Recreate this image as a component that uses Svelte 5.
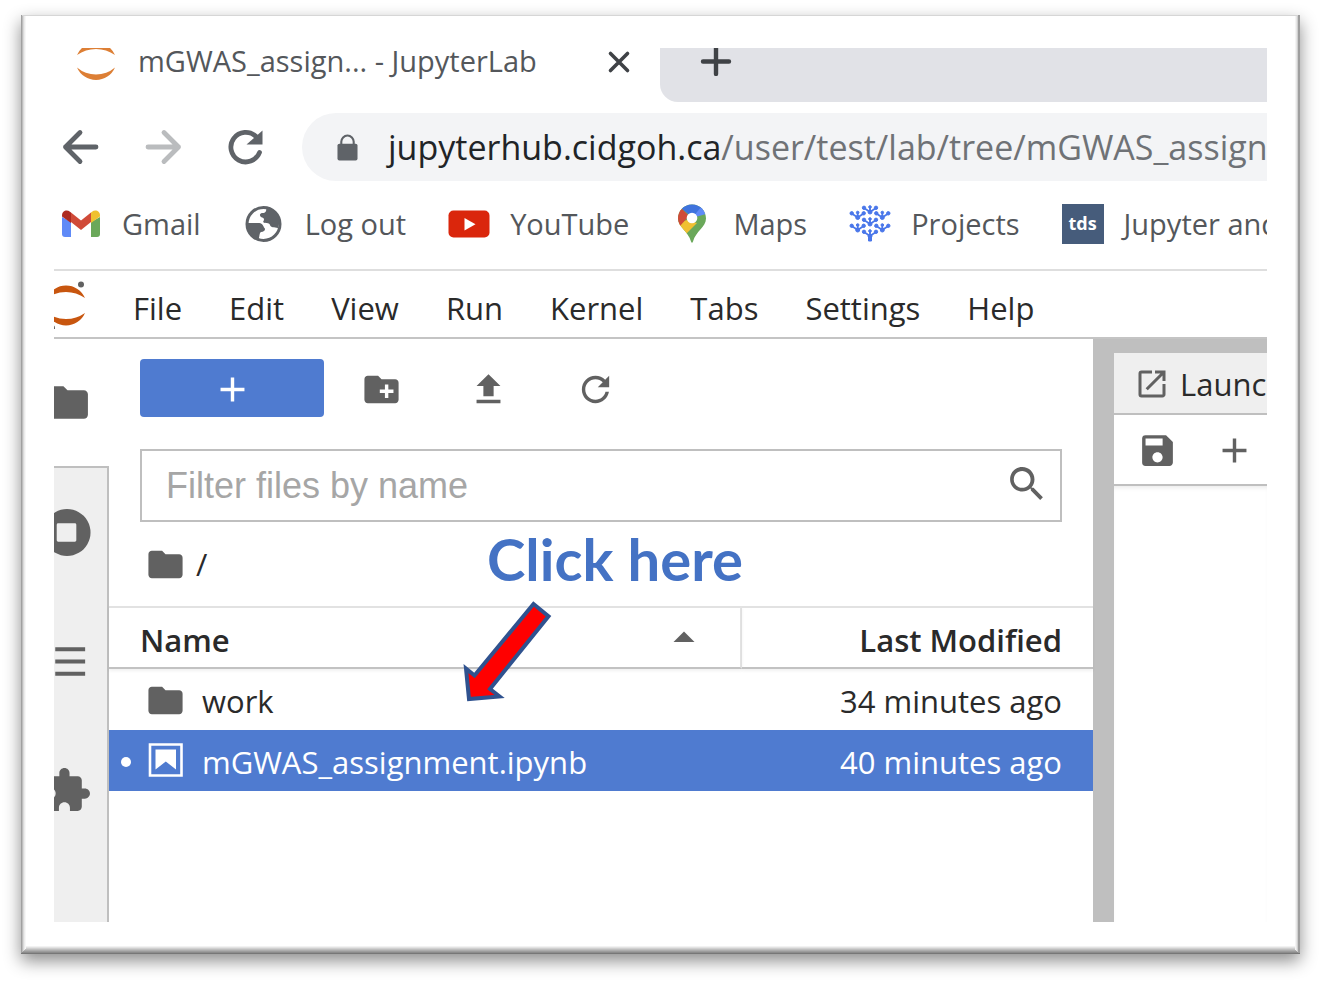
<script>
  const menus = ['File', 'Edit', 'View', 'Run', 'Kernel', 'Tabs', 'Settings', 'Help'];
  const bookmarks = [
    { id: 'gmail', label: 'Gmail' },
    { id: 'globe', label: 'Log out' },
    { id: 'youtube', label: 'YouTube' },
    { id: 'maps', label: 'Maps' },
    { id: 'projects', label: 'Projects' },
    { id: 'tds', label: 'Jupyter and' }
  ];
  const files = [
    { name: 'work', modified: '34 minutes ago', kind: 'folder', selected: false },
    { name: 'mGWAS_assignment.ipynb', modified: '40 minutes ago', kind: 'notebook', selected: true }
  ];
  const folder = 'M10 4H4c-1.1 0-1.99.9-1.99 2L2 18c0 1.1.9 2 2 2h16c1.1 0 2-.9 2-2V8c0-1.1-.9-2-2-2h-8l-2-2z';
  const plus = 'M19 13h-6v6h-2v-6H5v-2h6V5h2v6h6v2z';
  // Branch points of the dotted tree; each carries three buds above it.
  const branches = [[21, 9], [8.7, 14.5], [33.3, 14.5], [21, 21], [8.7, 27], [33.3, 27], [21, 33]];
</script>

<main class="frame">
  <div class="screen">
    <header>
      <div class="tabstrip">
        <div class="tab">
          <svg class="tab-logo" viewBox="0 0 38 34" fill="#dd7f35" aria-hidden="true">
            <path d="M0 7A20.7 20.7 0 0 1 38 7A33 33 0 0 0 0 7Z" />
            <path d="M0 19.500A20.7 20.7 0 0 0 38 19.500A29 29 0 0 1 0 19.500Z" />
          </svg>
          <span class="tab-title">mGWAS_assign... - JupyterLab</span>
          <button class="tab-close" aria-label="Close tab">
            <svg viewBox="0 0 24 24" stroke="#3f4246" stroke-width="3.600" stroke-linecap="round"><path d="M3.500 3.500l17 17M20.500 3.500l-17 17" /></svg>
          </button>
        </div>
        <div class="strip-rest">
          <button class="new-tab" aria-label="New tab">
            <svg viewBox="0 0 32 28" stroke="#3f4246" stroke-width="4.400" stroke-linecap="round"><path d="M3 13.500h26M16 -2v28" /></svg>
          </button>
        </div>
      </div>

      <div class="nav">
        <button aria-label="Back">
          <svg viewBox="0 0 42 42" fill="none" stroke="#5f6368" stroke-width="4.800" stroke-linecap="round" stroke-linejoin="round"><path d="M37 21H6.500M21 6.500L6.500 21L21 35.500" /></svg>
        </button>
        <button aria-label="Forward">
          <svg viewBox="0 0 42 42" fill="none" stroke="#babcbe" stroke-width="4.800" stroke-linecap="round" stroke-linejoin="round"><path d="M6 21h30.500M22 6.500L36.500 21L22 35.500" /></svg>
        </button>
        <button aria-label="Reload">
          <svg viewBox="0 0 42 42"><path d="M34.500 26.500A14.800 14.800 0 1 1 31 10.500" fill="none" stroke="#5f6368" stroke-width="4.800" stroke-linecap="round" /><path d="M37.500 4.500v14h-16z" fill="#5f6368" /></svg>
        </button>
        <div class="address">
          <svg class="lock" viewBox="0 0 22 28" aria-hidden="true"><rect x="0.500" y="10" width="21" height="17.500" rx="2" fill="#5f6368" /><path d="M4.500 11V8a6.500 6.500 0 0 1 13 0V11" fill="none" stroke="#5f6368" stroke-width="2.200" /></svg>
          <span class="url"><b>jupyterhub.cidgoh.ca</b>/user/test/lab/tree/mGWAS_assign</span>
        </div>
      </div>

      <nav class="bookmarks" aria-label="Bookmarks">
        {#each bookmarks as mark}
          <a href="#{mark.id}">
            {#if mark.id === 'tds'}
              <span class="tds">tds</span>
            {:else}
              <svg viewBox="0 0 42 42" aria-hidden="true">
                {#if mark.id === 'gmail'}
                  <path d="M2 14v17a3 3 0 0 0 3 3h6V19z" fill="#5f8af7" />
                  <path d="M40 14v17a3 3 0 0 1-3 3h-6V19z" fill="#6aa85a" />
                  <path d="M11 9.500L21 17.500L31 9.500V19L21 27L11 19z" fill="#d04a38" />
                  <path d="M2 12.500C2 7.500 7 6.500 10 8.700L11 9.500V20L2 13.500z" fill="#ad2a20" />
                  <path d="M40 12.500C40 7.500 35 6.500 32 8.700L31 9.500V20L40 13.500z" fill="#efc12f" />
                {:else if mark.id === 'globe'}
                  <circle cx="20.500" cy="21" r="16.500" fill="#fff" stroke="#5f6368" stroke-width="3" />
                  <path d="M23 5C24 8 22 10 20 10C17 10 16 12 18 14C21 15 22 16 20 19C22 21 26 19 27 22C28 25 31 24 35 25C39 16 33 5 23 5Z" fill="#5f6368" />
                  <path d="M4 20H15C19 20 20 22 21 24.500C23 26 22 29 18 29C16 30 17 34 15 37C8 35 3 27 4 20Z" fill="#5f6368" />
                {:else if mark.id === 'youtube'}
                  <rect x="0.500" y="7.500" width="41" height="27" rx="5" fill="#da260c" /><path d="M16.500 15v12.500L27.500 21.200z" fill="#fff" />
                {:else if mark.id === 'maps'}
                  <clipPath id="pin"><path d="M21 1.500C12.500 1.500 7 8 7 15.500C7 24 17 28 20 38.500Q21 41 22 38.500C25 28 35 24 35 15.500C35 8 29.500 1.500 21 1.500Z" /></clipPath>
                  <g clip-path="url(#pin)">
                    <path d="M0 0h42v42H0z" fill="#6aa85a" />
                    <path d="M11 6L21 14L33 5L26 -1H8z" fill="#3f73dd" />
                    <path d="M21 15L31 3L38 10z" fill="#5f8af7" />
                    <path d="M7 20L16 17L26 20L13 33L5 25z" fill="#f0c033" />
                    <path d="M7 8L11 6L18 13L9 23L4 20z" fill="#cf4b38" />
                  </g>
                  <circle cx="21" cy="15" r="5.300" fill="#fff" />
                {:else}
                  <g fill="#4a77ea" stroke="#4a77ea">
                    {#each branches as [x, y]}
                      <path d="M{x - 6} {y - 4}L{x} {y}L{x + 6} {y - 4}M{x} {y - 4.5}V{y + 1}" fill="none" stroke-width="1.800" />
                      <circle cx={x - 6} cy={y - 4.200} r="1.700" />
                      <circle cx={x + 6} cy={y - 4.200} r="1.700" />
                      <circle cx={x} cy={y - 5} r="1.300" />
                      <circle cx={x} cy={y} r="2" />
                    {/each}
                    <path d="M19.500 33h3v5h-3z" />
                  </g>
                {/if}
              </svg>
            {/if}
            <span>{mark.label}</span>
          </a>
        {/each}
      </nav>
    </header>

    <nav class="menubar" aria-label="Main menu">
      <svg class="logo" viewBox="0 0 32 50" aria-hidden="true">
        <path d="M-7 19A20.7 20.7 0 0 1 31 19A33 33 0 0 0 -7 19Z" fill="#c8560f" />
        <path d="M-7 34A20.7 20.7 0 0 0 31 34A33 33 0 0 1 -7 34Z" fill="#c8560f" />
        <circle cx="27" cy="5.500" r="3" fill="#616161" /><circle cx="-2" cy="49" r="3" fill="#616161" />
      </svg>
      {#each menus as menu}<button>{menu}</button>{/each}
    </nav>

    <div class="lab">
      <aside class="sidebar">
        <button class="current" aria-label="File browser"><svg viewBox="0 0 24 24"><path d={folder} /></svg></button>
        <button aria-label="Running"><svg viewBox="0 0 50 50"><path fill-rule="evenodd" d="M24.500 1a24 24 0 1 0 .01 0zM15.500 15.500h17q1.500 0 1.500 1.500v16q0 1.500-1.500 1.500h-17q-1.500 0-1.500-1.500v-16q0-1.500 1.500-1.500z" /></svg></button>
        <button aria-label="Table of contents"><svg viewBox="0 0 50 50"><path d="M12.500 10.500h30.500v4H12.500zM12.500 23h30.500v4H12.500zM12.500 35.500h30.500v4H12.500z" /></svg></button>
        <button aria-label="Extensions"><svg viewBox="0 0 24 24"><path d="M20.500 11H19V7c0-1.100-.9-2-2-2h-4V3.500C13 2.120 11.880 1 10.500 1S8 2.120 8 3.500V5H4c-1.100 0-1.990.9-1.990 2v3.800H3.500c1.490 0 2.700 1.210 2.700 2.700s-1.210 2.700-2.700 2.700H2V20c0 1.100.9 2 2 2h3.800v-1.500c0-1.490 1.210-2.700 2.700-2.700 1.490 0 2.700 1.210 2.700 2.700V22H17c1.100 0 2-.9 2-2v-4h1.500c1.380 0 2.500-1.120 2.500-2.500S21.880 11 20.500 11z" /></svg></button>
      </aside>

      <section class="browser">
        <div class="actions">
          <button class="launch" aria-label="New launcher"><svg viewBox="0 0 24 24"><path d={plus} /></svg></button>
          <button aria-label="New folder"><svg viewBox="0 0 24 24"><path d="M20 6h-8l-2-2H4c-1.110 0-1.990.89-1.990 2L2 18c0 1.110.89 2 2 2h16c1.110 0 2-.89 2-2V8c0-1.110-.89-2-2-2zm-1 8h-3v3h-2v-3h-3v-2h3V9h2v3h3v2z" /></svg></button>
          <button aria-label="Upload files"><svg viewBox="0 0 24 24"><path d="M9 16h6v-6h4l-7-7-7 7h4zm-4 2h14v2H5z" /></svg></button>
          <button aria-label="Refresh file list"><svg viewBox="0 0 18 18"><path d="M9 13.500c-2.490 0-4.500-2.010-4.500-4.500S6.510 4.500 9 4.500c1.240 0 2.360.52 3.170 1.330L10 8h5V3l-1.760 1.760C12.150 3.680 10.660 3 9 3 5.690 3 3.010 5.690 3.010 9S5.690 15 9 15c2.970 0 5.430-2.160 5.900-5h-1.520c-.46 2-2.240 3.500-4.380 3.500z" /></svg></button>
        </div>

        <label class="filter">
          <input type="text" placeholder="Filter files by name" aria-label="Filter files by name" />
          <svg viewBox="0 0 18 18" aria-hidden="true"><path d="M12.100 10.900h-.7l-.2-.2c.8-.9 1.300-2.200 1.300-3.500 0-3-2.400-5.400-5.400-5.400S1.800 4.200 1.800 7.100s2.400 5.400 5.400 5.400c1.300 0 2.500-.5 3.500-1.300l.2.200v.7l4.100 4.100 1.200-1.200zM7.100 10.900c-2.100 0-3.700-1.700-3.700-3.700s1.700-3.700 3.700-3.700 3.700 1.700 3.700 3.700-1.600 3.700-3.700 3.700z" /></svg>
        </label>

        <div class="crumbs"><svg viewBox="0 0 24 24" aria-hidden="true"><path d={folder} /></svg><span>/</span></div>

        <table>
          <thead>
            <tr>
              <th class="name"><div><span>Name</span><svg viewBox="0 0 22 18" aria-hidden="true"><path d="M0.500 11L11 0.500L21.500 11z" /></svg></div></th>
              <th class="date">Last Modified</th>
            </tr>
          </thead>
          <tbody>
            {#each files as file}
              <tr class:selected={file.selected}>
                <td class="name">
                  <div>
                    <i class="dot"></i>
                    {#if file.kind === 'folder'}
                      <svg viewBox="0 0 24 24" aria-hidden="true"><path d={folder} /></svg>
                    {:else}
                      <svg viewBox="0 0 41 41" aria-hidden="true"><path d="M5 3.500h31.500v31H5z" fill="none" stroke="#fff" stroke-width="2.600" /><path d="M10.500 8.500h20.500v20L20.800 20.500L10.500 28.500z" fill="#fff" /></svg>
                    {/if}
                    <span>{file.name}</span>
                  </div>
                </td>
                <td class="date">{file.modified}</td>
              </tr>
            {/each}
          </tbody>
        </table>

        <div class="callout">
          <strong>Click here</strong>
          <svg viewBox="0 0 92 106" aria-hidden="true"><path d="M72.500 5L87.500 17.300L29 90L38.500 97.500L8 100L5 69.500L13.500 76.500Z" fill="#f00" stroke="#2f528f" stroke-width="4" /></svg>
        </div>
      </section>

      <section class="dock">
        <div class="dock-tab">
          <svg viewBox="0 0 24 24" aria-hidden="true"><path d="M19 19H5V5h7V3H5a2 2 0 0 0-2 2v14a2 2 0 0 0 2 2h14c1.100 0 2-.9 2-2v-7h-2v7zM14 3v2h3.590l-9.830 9.830 1.410 1.410L19 6.410V10h2V3h-7z" /></svg>
          <span>Launc</span>
        </div>
        <div class="dock-tools">
          <button aria-label="Save"><svg viewBox="0 0 24 24"><path d="M17 3H5a2 2 0 0 0-2 2v14a2 2 0 0 0 2 2h14c1.100 0 2-.9 2-2V7l-4-4zm-5 16c-1.660 0-3-1.340-3-3s1.340-3 3-3 3 1.340 3 3-1.340 3-3 3zm3-10H5V5h10v4z" /></svg></button>
          <button aria-label="Insert cell"><svg viewBox="0 0 24 24"><path d={plus} /></svg></button>
        </div>
        <div class="dock-body"></div>
      </section>
    </div>
  </div>
</main>

<style>
  :global(body) { margin: 0; background: #fff; }
  :global(#app) { display: flex; flex-direction: column; min-height: 100vh; }
  * { box-sizing: border-box; }
  button { border: 0; padding: 0; background: none; font: inherit; color: inherit; display: flex; align-items: center; justify-content: center; }
  svg { display: block; flex: none; }

  .frame {
    flex: 1; display: flex; margin: 15px 21px 29px 21px; padding: 33px 33px 32px;
    background: #fff; font: 29px/40px "Open Sans", "Noto Sans", sans-serif; color: #2a2a2a;
    box-shadow:
      inset 0 -1px #777, inset 1px 0 #a0a0a0, inset -2px 0 #9e9e9e, inset 0 1px #d6d6d6,
      inset 0 -2px #8c8c8c, inset 2px 0 #bdbdbd, inset -3px 0 #cfcfcf,
      inset 0 -3px #9c9c9c, inset 3px 0 #dadada, inset -4px 0 #e6e6e6,
      inset 0 -4px #adadad, inset 4px 0 #ececec, inset -5px 0 #f4f4f4,
      inset 0 -5px #bebebe, inset 5px 0 #f7f7f7,
      inset 0 -6px #d0d0d0, inset 0 -7px #e2e2e2, inset 0 -8px #f2f2f2,
      0 7px 16px rgba(0, 0, 0, 0.45);
  }
  .screen { flex: 1; min-width: 0; display: flex; flex-direction: column; overflow: hidden; }

  .tabstrip { display: flex; height: 54px; }
  .tab { display: flex; align-items: flex-start; flex: none; width: 606px; padding: 0 29px 0 23px; }
  .tab-logo { width: 38px; height: 34px; overflow: hidden; }
  .tab-title { flex: 1; margin-left: 23px; line-height: 26px; color: #54575b; white-space: nowrap; }
  .tab-close { height: 28px; }
  .tab-close svg { width: 24px; height: 24px; }
  .strip-rest { flex: 1; background: #e1e2e7; border-bottom-left-radius: 18px; padding-left: 40px; }
  .new-tab svg { width: 32px; height: 28px; }

  .nav { display: flex; align-items: center; gap: 41px; padding: 11px 0 0 5px; }
  .nav svg { width: 42px; height: 42px; }
  .address { flex: 1; min-width: 0; display: flex; align-items: center; height: 68px; margin-left: -6px; padding-left: 35px; gap: 30px; background: #f3f4f6; border-radius: 34px 0 0 34px; overflow: hidden; }
  .nav .lock { width: 21px; height: 27px; }
  .url { font-size: 34px; color: #6f7276; white-space: nowrap; }
  .url b { font-weight: 400; color: #212427; }

  .bookmarks { display: flex; align-items: center; gap: 42px; height: 90px; padding: 0 0 2px 6px; border-bottom: 2px solid #dedede; }
  .bookmarks a { display: flex; align-items: center; gap: 20px; color: #54575b; text-decoration: none; white-space: nowrap; }
  .bookmarks svg { width: 42px; height: 42px; }
  .tds { width: 42px; height: 40px; background: #465c7b; color: #fff; font-size: 18px; font-weight: 700; line-height: 38px; text-align: center; }

  .menubar { display: flex; align-items: center; gap: 47px; height: 68px; padding-top: 8px; border-bottom: 2px solid #c4c4c4; font-size: 31px; }
  .logo { width: 32px; height: 50px; overflow: hidden; align-self: flex-start; }

  .lab { flex: 1; display: flex; font-size: 31px; }
  .lab svg { fill: #616161; }
  .sidebar { width: 55px; overflow: hidden; display: flex; flex-direction: column; align-items: flex-end; background: #efefef; box-shadow: inset -2px 0 #bfbfbf; }
  .sidebar button { flex: none; width: 83px; height: 129px; }
  .sidebar svg { width: 49px; height: 49px; }
  .sidebar .current { background: #fff; border-bottom: 2px solid #bfbfbf; }

  .browser { flex: 1; min-width: 0; position: relative; }
  .actions { display: flex; padding: 20px 31px 0; }
  .actions button { width: 107px; height: 58px; padding-top: 3px; }
  .actions svg, .filter svg, .crumbs svg, td svg, .dock-tools svg { width: 41px; height: 41px; }
  .actions .launch { width: 184px; margin-right: 4px; background: #4f7bd0; border-radius: 4px; }
  .actions .launch svg { fill: #fff; }
  .filter { display: flex; align-items: center; height: 73px; margin: 32px 31px 0; padding: 0 13px 4px 24px; border: 2px solid #bfbfbf; }
  .filter input { flex: 1; min-width: 0; height: 60px; border: 0; padding: 4px 0 0; outline: 0; background: none; font: 36px "Liberation Sans", Arial, sans-serif; color: #212121; }
  .filter input::placeholder { color: #a6a6a6; opacity: 1; }
  .crumbs { display: flex; align-items: center; gap: 10px; height: 84px; padding-left: 36px; }

  table { width: 100%; border-collapse: separate; border-spacing: 0; table-layout: fixed; }
  th { height: 63px; padding: 4px 31px 0; border-top: 2px solid #e2e2e2; border-bottom: 2px solid #c2c2c2; font-weight: 600; text-align: left; box-shadow: 0 2px 3px rgba(0, 0, 0, 0.06); }
  th.name { width: auto; border-right: 2px solid #e4e4e4; padding-right: 45px; }
  th.date { width: 351px; }
  th div { display: flex; align-items: center; justify-content: space-between; }
  th svg { width: 22px; height: 18px; }
  td { height: 61px; padding: 2px 31px 0 0; white-space: nowrap; }
  .date { text-align: right; }
  td div { display: flex; align-items: center; }
  td span { margin-left: 16px; }
  .dot { width: 10px; height: 10px; margin: 0 14px 0 12px; border-radius: 50%; }
  .selected { background: #4f7bd0; color: #fff; }
  .selected .dot { background: #fff; }

  .callout { position: absolute; left: 378px; top: 185px; }
  .callout strong { display: block; font: 700 58px/70px Lato, sans-serif; color: #4472c4; white-space: nowrap; }
  .callout svg { position: absolute; left: -26px; top: 75px; width: 92px; height: 106px; }

  .dock { width: 174px; display: flex; flex-direction: column; padding-top: 14px; border-left: 21px solid #bfbfbf; background: #bfbfbf; }
  .dock-tab { display: flex; align-items: center; gap: 10px; height: 62px; padding: 2px 0 0 20px; background: #efefef; border-bottom: 2px solid #bfbfbf; overflow: hidden; }
  .dock-tab svg { width: 36px; height: 36px; }
  .dock-tools { display: flex; align-items: center; gap: 36px; height: 71px; padding: 2px 0 0 23px; background: #fff; border-bottom: 2px solid #bfbfbf; }
  .dock-body { flex: 1; background: #fff; box-shadow: inset 0 4px 4px -2px rgba(0, 0, 0, 0.08); }
</style>
